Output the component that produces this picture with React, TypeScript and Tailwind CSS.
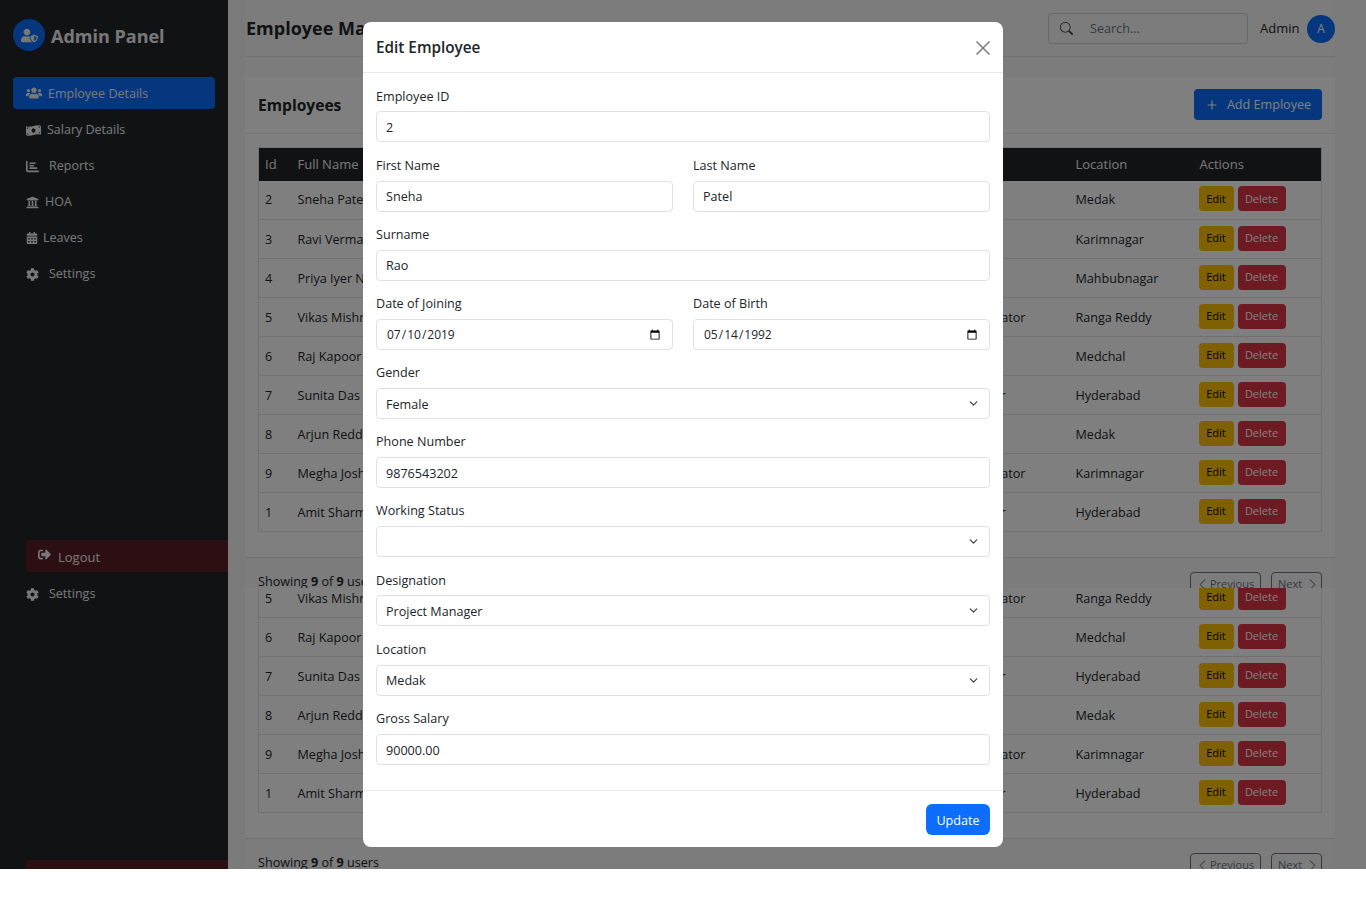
import { ChevronDown, Plus } from "lucide-react";
import { BsChevronLeft, BsChevronRight, BsSearch } from "react-icons/bs";
import {
  FaCalendarAlt,
  FaCog,
  FaMoneyBillWave,
  FaSignOutAlt,
  FaUniversity,
  FaUserShield,
  FaUsers,
} from "react-icons/fa";
import { FaChartBar } from "react-icons/fa6";

const employees = [
  { id: 2, name: "Sneha Patel", role: "", location: "Medak" },
  { id: 3, name: "Ravi Verma", role: "", location: "Karimnagar" },
  { id: 4, name: "Priya Iyer Nair", role: "", location: "Mahbubnagar" },
  { id: 5, name: "Vikas Mishra", role: "System Administrator", location: "Ranga Reddy" },
  { id: 6, name: "Raj Kapoor", role: "", location: "Medchal" },
  { id: 7, name: "Sunita Das", role: "Software Engineer", location: "Hyderabad" },
  { id: 8, name: "Arjun Reddy", role: "", location: "Medak" },
  { id: 9, name: "Megha Joshi", role: "System Administrator", location: "Karimnagar" },
  { id: 1, name: "Amit Sharma", role: "Software Engineer", location: "Hyderabad" },
];

const navItems = [
  { label: "Salary Details", icon: FaMoneyBillWave, gap: "gap-[6px]", size: "text-[15px]" },
  { label: "Reports", icon: FaChartBar, gap: "gap-[10px]", size: "text-[13px]" },
  { label: "HOA", icon: FaUniversity, gap: "gap-[6px]", size: "text-[13px]" },
  { label: "Leaves", icon: FaCalendarAlt, gap: "gap-[5px]", size: "text-[12px]" },
  { label: "Settings", icon: FaCog, gap: "gap-[10px]", size: "text-[13px]" },
];

function SettingsLink() {
  return (
    <div className="flex h-9 shrink-0 items-center gap-[10px] pl-[26px] text-[12.5px] text-[#f1f1f1]">
      <FaCog className="text-[13px]" />
      <span>Settings</span>
    </div>
  );
}

function Sidebar() {
  return (
    <aside className="flex h-full w-[228px] shrink-0 flex-col overflow-hidden bg-[#212529] text-[#f1f1f1]">
      <div className="flex h-[77px] shrink-0 items-start gap-[6px] pl-[13px] pt-[19px]">
        <div className="flex h-8 w-8 items-center justify-center rounded-full bg-[#0d6efd]">
          <FaUserShield className="text-[17px]" />
        </div>
        <span className="mt-[2px] text-[18px] leading-[30px] font-bold">Admin Panel</span>
      </div>

      <nav className="flex shrink-0 flex-col">
        <div className="mx-[13px] flex h-8 items-center gap-[6px] rounded bg-[#0d6efd] pl-[13px] text-[12.5px]">
          <FaUsers className="text-[16px]" />
          <span className="mt-[2px]">Employee Details</span>
        </div>
        <div className="h-[3px]" />
        {navItems.map((item) => (
          <div key={item.label} className={`flex h-9 items-center pl-[26px] text-[12.5px] ${item.gap}`}>
            <item.icon className={item.size} />
            <span>{item.label}</span>
          </div>
        ))}
      </nav>

      <div className="h-[248px] shrink-0" />
      <div className="ml-[26px] flex h-8 shrink-0 items-center gap-[7px] rounded-l bg-[#5a1f26] pl-3 text-[13px]">
        <FaSignOutAlt className="-mt-[3px]" />
        <span className="mt-[3px]">Logout</span>
      </div>
      <div className="h-1 shrink-0" />
      <SettingsLink />
      <div className="h-[248px] shrink-0" />
      <div className="ml-[26px] h-8 shrink-0 rounded-l bg-[#5a1f26]" />
    </aside>
  );
}

function EmployeeRow({ employee }: { employee: (typeof employees)[number] }) {
  return (
    <tr className="h-[39px] border-b border-[#dee2e6]">
      <td className="px-2 pl-[6px] pt-[2px]">{employee.id}</td>
      <td className="px-2 pt-[2px]">{employee.name}</td>
      <td className="px-2 pt-[2px]">{employee.role}</td>
      <td className="px-2 pt-[2px]">{employee.location}</td>
      <td className="px-2 pl-[7px] pt-[2px]">
        <div className="mb-1 flex gap-1">
          <span className="flex h-[25px] w-[35px] items-center justify-center rounded bg-[#ffc107] text-[11px] text-black">
            Edit
          </span>
          <span className="flex h-[25px] w-[48px] items-center justify-center rounded bg-[#dc3545] text-[11px] text-white">
            Delete
          </span>
        </div>
      </td>
    </tr>
  );
}

// the page content, drawn twice in the main column
function Content() {
  return (
    <div className="ml-[17px] mr-[31px] h-[869px] bg-white">
      <header className="flex h-[57px] items-center border-b border-[#dee2e6] bg-[#f8f9fa] pt-px">
        <h1 className="ml-px text-[18px] font-bold text-[#212529]">Employee Management</h1>
        <div className="ml-auto flex h-[31px] w-[200px] items-center gap-[17px] rounded border border-[#ced4da] bg-[#f8f9fa] pl-[11px] text-[12.6px] text-[#6c757d]">
          <BsSearch className="text-[13px] text-[#343a40]" />
          <span className="mt-[2px]">Search...</span>
        </div>
        <span className="ml-3 w-[40px] text-[13px] whitespace-nowrap text-[#212529]">Admin</span>
        <div className="ml-[7px] flex h-7 w-7 items-center justify-center rounded-full bg-[#0d6efd] text-[12px] text-white">
          A
        </div>
      </header>
      <div className="h-5 bg-[#f8f9fa]" />

      <section className="rounded-t-lg bg-white">
        <div className="flex h-[57px] items-center justify-between border-b border-[#e9ecef] px-[13px]">
          <h2 className="mt-[2px] text-[15.6px] font-bold text-[#212529]">Employees</h2>
          <button className="-mt-[2px] flex h-[31px] w-[128px] items-center justify-center gap-2 rounded bg-[#0d6efd] pt-[2px] text-[12.6px] text-white">
            <Plus className="h-[14px] w-[14px]" />
            Add Employee
          </button>
        </div>
        <div className="h-[423px] px-[13px] pt-[13px]">
          <table className="w-full table-fixed border border-[#dee2e6] text-[12.6px] text-[#212529]">
            <colgroup>
              <col className="w-[31px]" />
              <col className="w-[601px]" />
              <col className="w-[177px]" />
              <col className="w-[124px]" />
              <col />
            </colgroup>
            <thead>
              <tr className="h-[33px] bg-[#212529] text-left text-[13px] text-[#f1f1f1]">
                <th className="px-2 pl-[6px] font-normal">Id</th>
                <th className="px-2 font-normal">Full Name</th>
                <th className="px-2 font-normal">Designation</th>
                <th className="px-2 font-normal">Location</th>
                <th className="px-2 font-normal">Actions</th>
              </tr>
            </thead>
            <tbody>
              {employees.map((employee) => (
                <EmployeeRow key={employee.id} employee={employee} />
              ))}
            </tbody>
          </table>
        </div>
        <div className="flex items-start justify-between border-t border-[#dee2e6] bg-[#f8f9fa] px-[13px] pt-[14px] text-[12.6px] text-[#212529]">
          <span className="mt-px">
            Showing <b>9</b> of <b>9</b> users
          </span>
          <div className="flex gap-[10px] text-[11px] text-[#6c757d]">
            <span className="flex h-[25px] w-[71px] items-center gap-px rounded border border-[#6c757d] pl-[5px]">
              <BsChevronLeft className="text-[13px]" />
              Previous
            </span>
            <span className="flex h-[25px] w-[51px] items-center gap-1 rounded border border-[#6c757d] pl-[6px]">
              Next
              <BsChevronRight className="text-[13px]" />
            </span>
          </div>
        </div>
      </section>
    </div>
  );
}

const inputClass =
  "h-[31px] w-full rounded border border-[#dee2e6] bg-white px-[9px] text-[12.6px] text-[#212529] outline-none";

function Field({ label, children }: { label: string; children: React.ReactNode }) {
  return (
    <div className="mb-[14.35px]">
      <label className="mb-[6.8px] block text-[12.6px] leading-[17px] text-[#212529]">{label}</label>
      {children}
    </div>
  );
}

function SelectField({ label, value, options }: { label: string; value: string; options: string[] }) {
  return (
    <Field label={label}>
      <div className="relative">
        <select defaultValue={value} className={`${inputClass} appearance-none pt-[3px]`}>
          {options.map((option) => (
            <option key={option}>{option}</option>
          ))}
        </select>
        <ChevronDown className="pointer-events-none absolute right-[10px] top-[9px] h-[13px] w-[13px] text-[#343a40]" />
      </div>
    </Field>
  );
}

function EditModal() {
  return (
    <div className="absolute inset-0 bg-black/50">
      <div className="absolute left-[363px] top-[22px] h-[825px] w-[640px] rounded-lg bg-white">
        <div className="flex h-[51px] items-center justify-between border-b border-[#e9ecef] pl-[13px] pr-[13px] pt-[1px]">
          <h5 className="text-[15.3px] font-semibold text-[#212529]">Edit Employee</h5>
          <svg className="h-[14px] w-[14px] text-[#7b7b7b]" viewBox="0 0 14 14" fill="none" stroke="currentColor" strokeWidth={1.5}>
            <path d="M0.5 0.5L13.5 13.5M13.5 0.5L0.5 13.5" />
          </svg>
        </div>
        <form className="h-[718px] border-b border-[#e9ecef] px-[13px] pt-[14.6px]">
          <Field label="Employee ID">
            <input className={`${inputClass} pt-[1px]`} defaultValue="2" />
          </Field>
          <div className="grid grid-cols-2 gap-x-5">
            <Field label="First Name">
              <input className={inputClass} defaultValue="Sneha" />
            </Field>
            <Field label="Last Name">
              <input className={inputClass} defaultValue="Patel" />
            </Field>
          </div>
          <Field label="Surname">
            <input className={inputClass} defaultValue="Rao" />
          </Field>
          <div className="grid grid-cols-2 gap-x-5">
            <Field label="Date of Joining">
              <input type="date" className={`${inputClass} pt-[2px] text-[12px]`} defaultValue="2019-07-10" />
            </Field>
            <Field label="Date of Birth">
              <input type="date" className={`${inputClass} pt-[2px] text-[12px]`} defaultValue="1992-05-14" />
            </Field>
          </div>
          <SelectField label="Gender" value="Female" options={["Male", "Female", "Other"]} />
          <Field label="Phone Number">
            <input className={`${inputClass} pt-[2px]`} defaultValue="9876543202" />
          </Field>
          <SelectField label="Working Status" value="" options={["", "Active", "Inactive"]} />
          <SelectField label="Designation" value="Project Manager" options={["Project Manager"]} />
          <SelectField label="Location" value="Medak" options={["Medak", "Medchal", "Hyderabad"]} />
          <Field label="Gross Salary">
            <input className={`${inputClass} pt-[2px]`} defaultValue="90000.00" />
          </Field>
        </form>
        <div className="flex justify-end px-[13px] pt-[13px]">
          <button className="h-[31px] w-16 rounded-md bg-[#0d6efd] pt-[3px] text-[12.6px] text-white">Update</button>
        </div>
      </div>
    </div>
  );
}

export default function App() {
  return (
    <div
      className="relative flex h-[869px] overflow-hidden bg-white"
      style={{ fontFamily: '"Open Sans", sans-serif' }}
    >
      <Sidebar />
      <main className="flex min-w-0 flex-1 flex-col bg-[#f4f5f6]">
        <div className="h-[588px] shrink-0 overflow-hidden">
          <Content />
        </div>
        <div className="h-[281px] shrink-0 overflow-hidden">
          <div className="-mt-[307px]">
            <Content />
          </div>
        </div>
      </main>
      <EditModal />
    </div>
  );
}
